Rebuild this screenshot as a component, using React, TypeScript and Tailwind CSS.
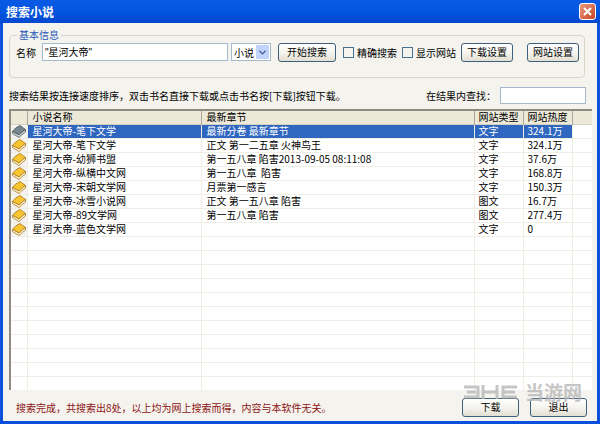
import React from 'react';
import { ChevronDown } from 'lucide-react';

const RESULTS = [
  { name: '星河大帝-笔下文学', latest: '最新分卷 最新章节', type: '文字', heat: '324.1万' },
  { name: '星河大帝-笔下文学', latest: '正文 第一二五章 火神鸟王', type: '文字', heat: '324.1万' },
  { name: '星河大帝-幼狮书盟', latest: '第一五八章 陷害2013-09-05 08:11:08', type: '文字', heat: '37.6万' },
  { name: '星河大帝-纵横中文网', latest: '第一五八章  陷害', type: '文字', heat: '168.8万' },
  { name: '星河大帝-宋朝文学网', latest: '月票第一感言', type: '文字', heat: '150.3万' },
  { name: '星河大帝-冰雪小说网', latest: '正文 第一五八章 陷害', type: '图文', heat: '16.7万' },
  { name: '星河大帝-89文学网', latest: '第一五八章 陷害', type: '图文', heat: '277.4万' },
  { name: '星河大帝-蓝色文学网', latest: '', type: '文字', heat: '0' },
];

const EMPTY_ROWS = Array.from({ length: 11 }, (_, i) => i);

const BookIcon = ({ gray }: { gray?: boolean }) => (
  <svg width="14" height="13" viewBox="0 0 14 13" className="block ml-[1px]">
    <path d="M0.5 6.5 Q3 2.5 8 0.5 L13.5 4.5 Q10 7 7 10 Z" fill={gray ? '#75868e' : '#f8c530'} stroke={gray ? '#4a565a' : '#a8741a'} strokeWidth="0.8" />
    <path d="M0.5 6.5 L0.5 8.5 L7 12.5 Q10 9.5 13.5 7 L13.5 4.5 Q10 7 7 10 Z" fill={gray ? '#d4d8d8' : '#fff6d0'} stroke={gray ? '#4a565a' : '#a8741a'} strokeWidth="0.8" />
  </svg>
);

const XpButton = ({ children, className }: { children: React.ReactNode; className: string }) => (
  <button className={`h-[19px] shrink-0 rounded-[3px] border border-[#3f5f7c] bg-gradient-to-b from-white via-[#f5f4ee] to-[#e2dfd2] text-[10px] leading-none text-black ${className}`}>
    {children}
  </button>
);

const Check = ({ label }: { label: string }) => (
  <label className="flex items-center gap-[3px] text-[10px]">
    <span className="w-[11px] h-[11px] border border-[#47708f] bg-[#f4f3ee]" />
    {label}
  </label>
);

export default function App() {
  return (
    <div className="relative w-[600px] h-[424px] overflow-hidden flex flex-col bg-[#0a50dc] text-black text-[10px] font-['Noto_Sans_CJK_SC',sans-serif]">
      {/* Title bar */}
      <div className="h-[23px] shrink-0 flex items-center justify-between pl-[6px] pr-[4px] bg-gradient-to-b from-[#0a5ae6] via-[#0455e0] to-[#0347d0]">
        <span className="text-white text-[12px] font-bold">搜索小说</span>
        <span className="w-[17px] h-[17px] rounded-[3px] border border-white bg-gradient-to-br from-[#e89a80] to-[#c8401c] flex items-center justify-center">
          <svg width="11" height="11" viewBox="0 0 11 11">
            <path d="M2 2 L9 9 M9 2 L2 9" stroke="white" strokeWidth="2" />
          </svg>
        </span>
      </div>

      {/* Client area */}
      <div className="flex-1 min-h-0 mx-[3px] mb-[3px] bg-[#f4f3ee] flex flex-col pl-[6px] pr-[5px]">
        {/* 基本信息 */}
        <fieldset className="mt-[7px] mr-[7px] h-[48px] shrink-0 border border-[#d9d6c8] rounded-[4px] px-[5px] flex">
          <legend className="ml-[2px] px-[2px] text-[#1c56b8] text-[10px] leading-[10px]">基本信息</legend>
          <div className="flex items-center w-full h-[20px] mt-[2px]">
            <span className="w-[27px] shrink-0 pl-[1px]">名称</span>
            <div className="w-[186px] h-[18px] shrink-0 border border-[#a5b9cc] bg-white pl-[2px] leading-[15px]"><span className="font-['Liberation_Sans']">"</span>星河大帝<span className="font-['Liberation_Sans']">"</span></div>
            <div className="ml-[3px] w-[40px] h-[18px] shrink-0 border border-[#a5b9cc] bg-white flex items-center justify-between pl-[2px]">
              小说
              <span className="w-[13px] h-[14px] mr-[1px] bg-[#c1d3fb] rounded-[1px] flex items-center justify-center">
                <ChevronDown size={11} strokeWidth={3} className="text-[#3d5a94]" />
              </span>
            </div>
            <XpButton className="ml-[7px] w-[58px]">开始搜索</XpButton>
            <div className="ml-[7px] flex gap-[5px]">
              <Check label="精确搜索" />
              <Check label="显示网站" />
            </div>
            <XpButton className="ml-[5px] w-[52px]">下载设置</XpButton>
            <XpButton className="ml-[14px] w-[52px]">网站设置</XpButton>
          </div>
        </fieldset>

        {/* Hint + find in results */}
        <div className="h-[31px] shrink-0 flex items-center justify-between pt-[4px] pr-[6px]">
          <span>搜索结果按连接速度排序，双击书名直接下载或点击书名按[下载]按钮下载。</span>
          <div className="flex items-center gap-[2px]">
            <span className="mr-[2px]">在结果内查找：</span>
            <div className="w-[86px] h-[17px] border border-[#a5b9cc] bg-white" />
          </div>
        </div>

        {/* Results list */}
        <div className="h-[281px] shrink-0 border-l-2 border-t-2 border-[#8f8b80] bg-white overflow-hidden">
          <table className="w-[581px] table-fixed border-collapse leading-none">
            <colgroup>
              <col className="w-[16px]" />
              <col className="w-[174px]" />
              <col className="w-[273px]" />
              <col className="w-[49px]" />
              <col className="w-[49px]" />
              <col />
            </colgroup>
            <thead>
              <tr className="h-[13px] bg-[#ece9d8] border-b border-[#d6d2c2] font-normal">
                <th className="border-r border-[#aca899] font-normal" />
                <th className="border-r border-[#aca899] font-normal text-left pl-[5px]">小说名称</th>
                <th className="border-r border-[#aca899] font-normal text-left pl-[5px]">最新章节</th>
                <th className="border-r border-[#aca899] font-normal text-left pl-[4px]">网站类型</th>
                <th className="border-r border-[#aca899] font-normal text-left pl-[4px]">网站热度</th>
                <th />
              </tr>
            </thead>
            <tbody>
              {RESULTS.map((r, i) => (
                <tr key={i} className={`h-[14px] border-b border-[#efeee4] ${i === 0 ? 'text-white' : ''}`}>
                  <td className="border-r border-[#efeee4] p-0 bg-[#f4f3ee]"><BookIcon gray={i === 0} /></td>
                  <td className={`border-r border-[#efeee4] pl-[5px] ${i === 0 ? 'bg-[#2f66c0]' : ''}`}>{r.name}</td>
                  <td className={`border-r border-[#efeee4] pl-[5px] whitespace-pre ${i === 0 ? 'bg-[#2f66c0]' : ''}`}>{r.latest}</td>
                  <td className={`border-r border-[#efeee4] pl-[4px] ${i === 0 ? 'bg-[#2f66c0]' : ''}`}>{r.type}</td>
                  <td className={`border-r border-[#efeee4] pl-[4px] ${i === 0 ? 'bg-[#2f66c0]' : ''}`}>{r.heat}</td>
                  <td />
                </tr>
              ))}
              {EMPTY_ROWS.map((i) => (
                <tr key={i} className="h-[14px] border-b border-[#efeee4]">
                  <td className="border-r border-[#efeee4]" />
                  <td className="border-r border-[#efeee4]" />
                  <td className="border-r border-[#efeee4]" />
                  <td className="border-r border-[#efeee4]" />
                  <td className="border-r border-[#efeee4]" />
                  <td />
                </tr>
              ))}
            </tbody>
          </table>
        </div>

        {/* Status + actions */}
        <div className="flex-1 flex items-center pt-[3px] pr-[5px] pl-[7px]">
          <span className="flex-1 text-[#8c1414]">搜索完成，共搜索出8处，以上均为网上搜索而得，内容与本软件无关。</span>
          <XpButton className="w-[57px]">下载</XpButton>
          <XpButton className="ml-[11px] w-[57px]">退出</XpButton>
        </div>
      </div>

      {/* Watermark */}
      <div className="absolute left-[463px] top-[384px] flex items-center gap-[7px] opacity-80 pointer-events-none">
        <svg width="55" height="14" viewBox="0 0 55 14" fill="none" stroke="#b8b8b8" strokeWidth="3">
          <path d="M1 2 H15 V12 H1 M4 7 H13" />
          <path d="M20 0 V14 M34 0 V14 M20 7 H34" />
          <path d="M54 2 H40 V12 H54 M41 7 H52" />
        </svg>
        <span className="h-[15px] text-[19px] leading-[15px] font-bold text-[#b8b8b8]">当游网</span>
      </div>
    </div>
  );
}
